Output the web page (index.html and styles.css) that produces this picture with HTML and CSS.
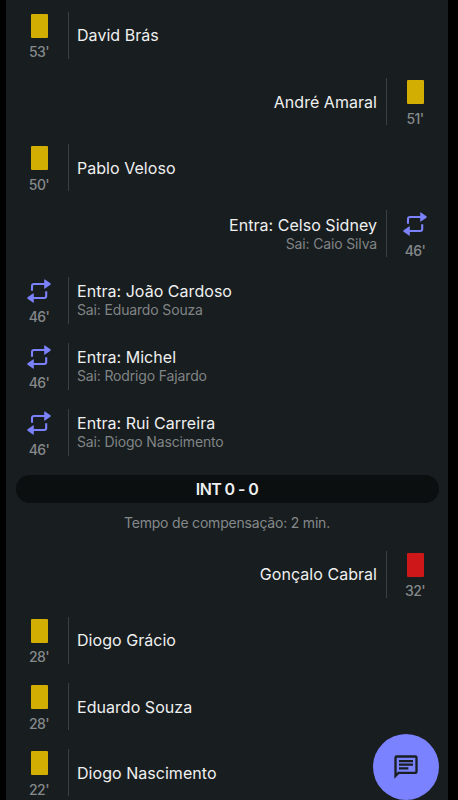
FILE: index.html
```
<!DOCTYPE html>
<html lang="pt">
<head>
<meta charset="utf-8">
<title>Incidentes</title>
<link rel="stylesheet" href="styles.css">
</head>
<body>
<svg class="defs" width="0" height="0">
  <symbol id="swap" viewBox="0 0 24 24">
    <path class="line" d="M5 11.800V7Q5 5 7 5H18M19.200 12.200V17q0 2-2 2H6"/>
    <path class="head" d="M17.200.8q0-1 .8-.4l5.400 3.900q.7.7 0 1.400L18 9.600q-.8.6-.8-.4zM6.800 23.200q0 1-.8.4L.6 19.700q-.7-.7 0-1.400L6 14.400q.8-.6.8.4z"/>
  </symbol>
</svg>
<main class="panel">
  <div class="row"><div class="event"><i class="card"></i><span class="time">53'</span></div><div class="info"><p class="name">David Brás</p></div></div>
  <div class="row away"><div class="event"><i class="card"></i><span class="time">51'</span></div><div class="info"><p class="name">André Amaral</p></div></div>
  <div class="row"><div class="event"><i class="card"></i><span class="time">50'</span></div><div class="info"><p class="name">Pablo Veloso</p></div></div>
  <div class="row away"><div class="event"><svg class="swap"><use href="#swap"/></svg><span class="time">46'</span></div><div class="info"><p class="name">Entra: Celso Sidney</p><p class="out">Sai: Caio Silva</p></div></div>
  <div class="row"><div class="event"><svg class="swap"><use href="#swap"/></svg><span class="time">46'</span></div><div class="info"><p class="name">Entra: João Cardoso</p><p class="out">Sai: Eduardo Souza</p></div></div>
  <div class="row"><div class="event"><svg class="swap"><use href="#swap"/></svg><span class="time">46'</span></div><div class="info"><p class="name">Entra: Michel</p><p class="out">Sai: Rodrigo Fajardo</p></div></div>
  <div class="row"><div class="event"><svg class="swap"><use href="#swap"/></svg><span class="time">46'</span></div><div class="info"><p class="name">Entra: Rui Carreira</p><p class="out">Sai: Diogo Nascimento</p></div></div>
  <div class="period">INT 0 - 0</div>
  <p class="added">Tempo de compensação: 2 min.</p>
  <div class="row away"><div class="event"><i class="card red"></i><span class="time">32'</span></div><div class="info"><p class="name">Gonçalo Cabral</p></div></div>
  <div class="row"><div class="event"><i class="card"></i><span class="time">28'</span></div><div class="info"><p class="name">Diogo Grácio</p></div></div>
  <div class="row"><div class="event"><i class="card"></i><span class="time">28'</span></div><div class="info"><p class="name">Eduardo Souza</p></div></div>
  <div class="row"><div class="event"><i class="card"></i><span class="time">22'</span></div><div class="info"><p class="name">Diogo Nascimento</p></div></div>
</main>
<button class="chat" aria-label="Chat">
  <svg viewBox="0 0 24 24"><path d="M2 22V4q0-2 2-2h16q2 0 2 2v12q0 2-2 2H6zM4 17.200L5.200 16H20V4H4zM6 6h12v1.900H6zM6 9.100h12V11H6zM6 12.200h8v1.900H6z" fill-rule="evenodd"/></svg>
</button>
</body>
</html>
```
FILE: styles.css
```
* { box-sizing: border-box; }
body {
  margin: 0;
  height: 800px;
  overflow: hidden;
  background: #000;
  font-family: Inter, sans-serif;
}
p { margin: 0; }
.defs { position: absolute; }
.panel {
  width: 442px;
  height: 800px;
  margin-left: 6px;
  padding-top: 2.3px;
  overflow: hidden;
  background: #181d1f;
}
.row {
  display: flex;
  align-items: center;
  height: 66.2px;
}
.away { flex-direction: row-reverse; }
.event {
  display: flex;
  flex-direction: column;
  align-items: center;
  flex: none;
  width: 66px;
  height: 47px;
}
.card {
  flex: none;
  width: 17px;
  height: 24px;
  margin: 2px 0 4.5px;
  border-radius: 1px;
  background: #d3ae02;
}
.red { background: #ce1719; }
.swap {
  flex: none;
  width: 24px;
  height: 24px;
  margin: 2px 0 4.5px;
}
.line { fill: none; stroke: #7b82fb; stroke-width: 2.1; }
.head { fill: #7b82fb; }
.time {
  color: #85898b;
  font-size: 14px;
  font-weight: 500;
  line-height: 20px;
  letter-spacing: -0.6px;
}
.info {
  display: flex;
  flex-direction: column;
  justify-content: center;
  height: 47px;
  margin-left: -4px;
  padding-left: 8px;
  border-left: 1px solid #3b4042;
}
.away .info {
  align-items: flex-end;
  margin: 0 -5px 0 0;
  padding: 0 9px 0 0;
  border-left: 0;
  border-right: 1px solid #3b4042;
}
.name { color: #eff0f0; font-size: 16px; line-height: 20px; letter-spacing: 0.04px; }
.out { color: #808486; font-size: 14px; line-height: 18.500px; letter-spacing: -0.15px; }
.period {
  height: 28px;
  margin: 9.5px 9.5px 0;
  border-radius: 14px;
  background: #0b0f10;
  color: #eff0f0;
  font-size: 16px;
  font-weight: 600;
  line-height: 28px;
  letter-spacing: -0.6px;
  text-align: center;
}
.added {
  height: 38px;
  color: #85898b;
  font-size: 14px;
  line-height: 40px;
  letter-spacing: -0.2px;
  text-align: center;
}
.chat {
  position: absolute;
  left: 373px;
  top: 734px;
  display: flex;
  align-items: center;
  justify-content: center;
  width: 66px;
  height: 66px;
  padding: 0;
  border: 0;
  border-radius: 50%;
  background: #7b82ff;
}
.chat svg { width: 28px; height: 28px; fill: #191e20; }
```
